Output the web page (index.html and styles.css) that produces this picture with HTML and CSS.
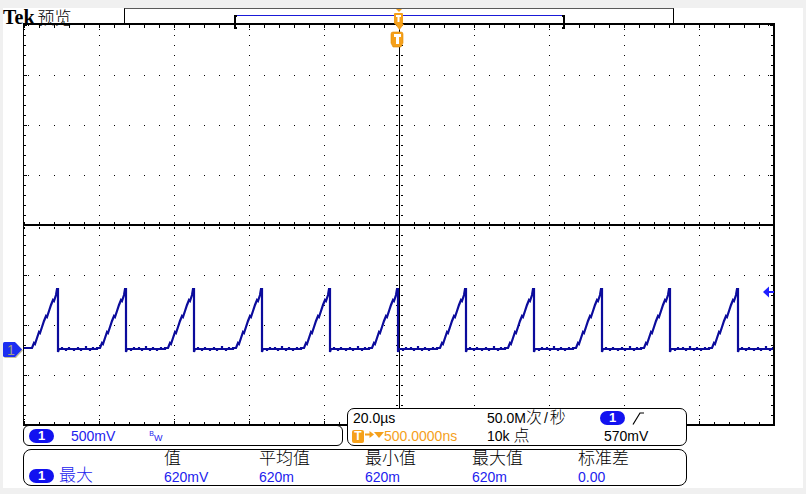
FILE: index.html
```html
<!DOCTYPE html>
<html lang="zh">
<head>
<meta charset="utf-8">
<title>Tek 预览</title>
<link rel="stylesheet" href="styles.css">
</head>
<body>
<div class="screen">
  <header class="header">
    <div class="brand"><span class="tek">Tek</span><span class="mode">预览</span></div>
    <div class="record">
      <div class="window"><div class="window-line"></div></div>
      <svg class="trig-pos" width="12" height="23" viewBox="393 8 12 23">
        <polygon points="396,9 402,9 399,12" fill="#f5a01a"/>
        <rect x="394" y="13" width="9" height="11" rx="1" fill="#f5a01a"/>
        <rect x="396" y="15" width="5" height="2" fill="#fff"/>
        <rect x="397.5" y="15" width="2" height="7" fill="#fff"/>
        <polygon points="395,24 404,24 399.5,30" fill="#f5a01a"/>
      </svg>
    </div>
  </header>

  <svg class="scope" width="772" height="403" viewBox="3 23 772 403">
    <defs>
      <pattern id="gh" patternUnits="userSpaceOnUse" x="24" y="25" width="15" height="50"><rect width="1" height="1" fill="#000"/></pattern>
      <pattern id="gv" patternUnits="userSpaceOnUse" x="24" y="25" width="75" height="10"><rect width="1" height="1" fill="#000"/></pattern>
      <pattern id="tx" patternUnits="userSpaceOnUse" x="24" y="0" width="15" height="10"><rect width="1" height="10" fill="#000"/></pattern>
      <pattern id="ty" patternUnits="userSpaceOnUse" x="0" y="25" width="10" height="10"><rect width="10" height="1" fill="#000"/></pattern>
      <pattern id="ge" patternUnits="userSpaceOnUse" x="24" y="25" width="2" height="50"><rect width="1" height="1" fill="#000"/></pattern>
      <pattern id="gt" patternUnits="userSpaceOnUse" x="24" y="25" width="75" height="2"><rect width="1" height="1" fill="#000"/></pattern>
      <pattern id="cy" patternUnits="userSpaceOnUse" x="395" y="25" width="9" height="10"><rect x="1" width="2" height="1" fill="#000"/><rect x="6" width="2" height="1" fill="#000"/></pattern>
      <pattern id="cx" patternUnits="userSpaceOnUse" x="24" y="220" width="15" height="9"><rect y="2" width="1" height="2" fill="#000"/><rect y="7" width="1" height="2" fill="#000"/></pattern>
      <clipPath id="plot"><rect x="24" y="25" width="749" height="399"/></clipPath>
    </defs>

    <g class="grid">
      <rect x="24" y="25" width="750" height="401" fill="url(#gh)"/>
      <rect x="24" y="25" width="750" height="400" fill="url(#gv)"/>
      <rect x="24" y="26" width="750" height="2" fill="url(#tx)"/>
      <rect x="24" y="422" width="750" height="2" fill="url(#tx)"/>
      <rect x="24" y="25" width="2" height="400" fill="url(#ty)"/>
      <rect x="771" y="25" width="2" height="400" fill="url(#ty)"/>
      <rect x="24" y="25" width="6" height="401" fill="url(#ge)"/>
      <rect x="768" y="25" width="5" height="401" fill="url(#ge)"/>
      <rect x="24" y="25" width="750" height="6" fill="url(#gt)"/>
      <rect x="24" y="419" width="750" height="6" fill="url(#gt)"/>
      <rect x="395" y="25" width="9" height="400" fill="url(#cy)"/>
      <rect x="24" y="220" width="750" height="9" fill="url(#cx)"/>
      <rect x="399" y="25" width="1" height="400" fill="#000"/>
      <rect x="24" y="224" width="750" height="2" fill="#000"/>
      <rect x="23" y="23" width="1" height="403" fill="#000"/>
      <rect x="23" y="23" width="752" height="2" fill="#000"/>
      <rect x="23" y="424" width="752" height="2" fill="#000"/>
      <rect x="773" y="23" width="2" height="403" fill="#000"/>
    </g>

    <path class="wave" clip-path="url(#plot)" d="M24 348 h8
      l2 -5 1 1 2 -6 2 -6 1 1 2 -6 2 -6 2 -5 1 1 2 -6 2 -6 2 -5 1 1 2 -6 1 -6 h1 v63 l1 -3 h3 v-2 v2 h4 v2 v-2 h3 v-2 v2 h5 v2 v-2 h4 v-2 v2 h3 v2 v-2 h5 v-3 v3 h4 v2 v-2 h3 v-2 v2 h4 v-1 h3
      l2 -5 1 1 2 -6 2 -6 1 1 2 -6 2 -6 2 -5 1 1 2 -6 2 -6 2 -5 1 1 2 -6 1 -6 h1 v63 l1 -3 h4 v2 v-2 h3 v-2 v2 h5 v-2 v2 h3 v2 v-2 h4 v-3 v3 h4 v2 v-2 h3 v-2 v2 h4 v2 v-2 h4 v-2 v2 h4 v-1 h3
      l2 -5 1 1 2 -6 2 -6 1 1 2 -6 2 -6 2 -5 1 1 2 -6 2 -6 2 -5 1 1 2 -6 1 -6 h1 v63 l1 -3 h3 v-2 v2 h4 v2 v-2 h3 v-2 v2 h5 v2 v-2 h4 v-2 v2 h3 v2 v-2 h5 v-3 v3 h4 v2 v-2 h3 v-2 v2 h4 v-1 h3
      l2 -5 1 1 2 -6 2 -6 1 1 2 -6 2 -6 2 -5 1 1 2 -6 2 -6 2 -5 1 1 2 -6 1 -6 h1 v63 l1 -3 h4 v2 v-2 h3 v-2 v2 h5 v-2 v2 h3 v2 v-2 h4 v-3 v3 h4 v2 v-2 h3 v-2 v2 h4 v2 v-2 h4 v-2 v2 h4 v-1 h3
      l2 -5 1 1 2 -6 2 -6 1 1 2 -6 2 -6 2 -5 1 1 2 -6 2 -6 2 -5 1 1 2 -6 1 -6 h1 v63 l1 -3 h3 v-2 v2 h4 v2 v-2 h3 v-2 v2 h5 v2 v-2 h4 v-2 v2 h3 v2 v-2 h5 v-3 v3 h4 v2 v-2 h3 v-2 v2 h4 v-1 h3
      l2 -5 1 1 2 -6 2 -6 1 1 2 -6 2 -6 2 -5 1 1 2 -6 2 -6 2 -5 1 1 2 -6 1 -6 h1 v63 l1 -3 h4 v2 v-2 h3 v-2 v2 h5 v-2 v2 h3 v2 v-2 h4 v-3 v3 h4 v2 v-2 h3 v-2 v2 h4 v2 v-2 h4 v-2 v2 h4 v-1 h3
      l2 -5 1 1 2 -6 2 -6 1 1 2 -6 2 -6 2 -5 1 1 2 -6 2 -6 2 -5 1 1 2 -6 1 -6 h1 v63 l1 -3 h3 v-2 v2 h4 v2 v-2 h3 v-2 v2 h5 v2 v-2 h4 v-2 v2 h3 v2 v-2 h5 v-3 v3 h4 v2 v-2 h3 v-2 v2 h4 v-1 h3
      l2 -5 1 1 2 -6 2 -6 1 1 2 -6 2 -6 2 -5 1 1 2 -6 2 -6 2 -5 1 1 2 -6 1 -6 h1 v63 l1 -3 h4 v2 v-2 h3 v-2 v2 h5 v-2 v2 h3 v2 v-2 h4 v-3 v3 h4 v2 v-2 h3 v-2 v2 h4 v2 v-2 h4 v-2 v2 h4 v-1 h3
      l2 -5 1 1 2 -6 2 -6 1 1 2 -6 2 -6 2 -5 1 1 2 -6 2 -6 2 -5 1 1 2 -6 1 -6 h1 v63 l1 -3 h3 v-2 v2 h4 v2 v-2 h3 v-2 v2 h5 v2 v-2 h4 v-2 v2 h3 v2 v-2 h5 v-3 v3 h4 v2 v-2 h3 v-2 v2 h4 v-1 h3
      l2 -5 1 1 2 -6 2 -6 1 1 2 -6 2 -6 2 -5 1 1 2 -6 2 -6 2 -5 1 1 2 -6 1 -6 h1 v63 l1 -3 h4 v2 v-2 h3 v-2 v2 h5 v-2 v2 h3 v2 v-2 h4 v-3 v3 h4 v2 v-2 h3 v-2 v2 h4 v2 v-2 h4 v-2 v2 h4 v-1 h3
      l2 -5 1 1 2 -6 2 -6 1 1 2 -6 2 -6 2 -5 1 1 2 -6 2 -6 2 -5 1 1 2 -6 1 -6 h1 v63 l1 -3 h3 v-2 v2 h4 v2 v-2 h3 v-2 v2 h5 v2 v-2 h4 v-2 v2 h3 v2 v-2 h5 v-3 v3 h4 v2 v-2 h3 v-2 v2 h4 v-1 h3"/>

    <g class="level-marker" fill="#1f1fff">
      <path d="M763 292 L769 286.5 V297.5 Z"/>
      <rect x="769" y="291" width="5" height="2"/>
    </g>

    <g class="trig-marker">
      <path d="M391 34 Q391 32 393 32 H401 Q403 32 403 34 V43 L401 47 H393 L391 43 Z" fill="#f5a01a" stroke="#e08c00" stroke-width="0.6"/>
      <rect x="394" y="34" width="7" height="3" fill="#fff"/>
      <rect x="396" y="34" width="3" height="10" fill="#fff"/>
    </g>

    <g class="ch-marker">
      <path d="M5.5 343 H16 L23 350.5 L16 358 H5.5 Q4 358 4 356.5 V344.5 Q4 343 5.5 343 Z" fill="#c4c0a0"/>
      <path d="M4.5 342 H15 L22 349.5 L15 357 H4.5 Q3 357 3 355.5 V343.5 Q3 342 4.5 342 Z" fill="#1c2ef2"/>
      <text x="7" y="355" font-family="Liberation Sans, sans-serif" font-size="14" fill="#a29e80">1</text>
    </g>
  </svg>

  <div class="readouts">
    <div class="panel ch-panel">
      <span class="pill">1</span>
      <span class="ch-text">500mV<span class="bw"><span class="bw-b">B</span><span class="bw-w">W</span></span></span>
    </div>
    <div class="panel tb-panel">
      <div class="tb-cell">20.0µs</div>
      <div class="tb-cell">50.0M<span class="cj">次</span><span class="slash">/</span><span class="cj">秒</span></div>
      <div class="tb-cell tb-trig">
        <span class="pill">1</span>
        <svg class="slope" width="13" height="13" viewBox="0 0 13 13"><polyline points="1,12.5 8,1 12,1" fill="none" stroke="#000" stroke-width="1.2"/></svg>
      </div>
      <div class="tb-cell tb-delay">
        <span class="tbox">T</span>
        <svg class="arrow" width="9" height="7" viewBox="0 0 9 7"><rect x="0" y="2.5" width="5" height="2" fill="#f5a01a"/><polygon points="4.5,0 9,3.5 4.5,7" fill="#f5a01a"/></svg>
        <svg class="tri" width="10" height="6" viewBox="0 0 10 6"><polygon points="0,0 10,0 5,6" fill="#f5a01a"/></svg>
        <span>500.0000ns</span>
      </div>
      <div class="tb-cell">10k <span class="cj">点</span></div>
      <div class="tb-cell tb-level">570mV</div>
    </div>
  </div>

  <div class="panel meas">
    <div class="mh-empty"></div>
    <div class="mh">值</div>
    <div class="mh">平均值</div>
    <div class="mh">最小值</div>
    <div class="mh">最大值</div>
    <div class="mh">标准差</div>
    <div class="mlabel"><span class="pill">1</span><span class="mname">最大</span></div>
    <div class="mv">620mV</div>
    <div class="mv">620m</div>
    <div class="mv">620m</div>
    <div class="mv">620m</div>
    <div class="mv">0.00</div>
  </div>
</div>
</body>
</html>
```

FILE: styles.css
```css
* {
  box-sizing: border-box;
}

html,
body {
  margin: 0;
  padding: 0;
}

body {
  background: #f0f0f0;
  font-family: "Liberation Sans", "Noto Sans CJK SC", sans-serif;
  font-size: 14px;
  color: #000;
}

.screen {
  width: 800px;
  height: 480px;
  margin: 8px 0 0 3px;
  background: #fff;
}

/* ---------- header ---------- */
.header {
  display: grid;
  grid-template-columns: 121px 550px;
  height: 15px;
}

.brand {
  display: flex;
  align-items: baseline;
  height: 15px;
  line-height: 15px;
  padding-top: 1px;
  white-space: nowrap;
}

.tek {
  font-family: "Liberation Serif", serif;
  font-weight: bold;
  font-size: 20px;
}

.mode {
  font-family: "Noto Sans CJK SC", sans-serif;
  font-weight: 300;
  font-size: 17px;
  margin-left: 3px;
}

.record {
  position: relative;
  height: 15px;
  border-top: 1px solid #5a5a5a;
  border-left: 1px solid #000;
  border-right: 1px solid #000;
  padding-left: 109px;
}

.window {
  position: relative;
  width: 331px;
  height: 14px;
  border-left: 2px solid #000;
  border-right: 2px solid #000;
}

.window::before,
.window::after {
  content: "";
  position: absolute;
  top: 0;
  bottom: 0;
  width: 1px;
  border-top: 2px solid #000;
  border-bottom: 2px solid #000;
}

.window::before {
  left: 0;
}

.window::after {
  right: 0;
}

.window-line {
  height: 1px;
  margin-top: 6px;
  background: #1a1ad8;
}

.trig-pos {
  position: absolute;
  left: 268px;
  top: -1px;
  display: block;
}

/* ---------- graticule ---------- */
.scope {
  display: block;
}

.wave {
  fill: none;
  stroke: #0b0b9c;
  stroke-width: 2.2;
}

/* ---------- readouts ---------- */
.readouts {
  display: flex;
  align-items: flex-end;
  height: 21px;
  margin-top: -1px;
  padding-left: 20px;
  gap: 4px;
}

.panel {
  border: 1px solid #000;
  background: #fff;
}

.pill {
  display: inline-flex;
  align-items: center;
  justify-content: center;
  flex: none;
  width: 25px;
  height: 14px;
  border-radius: 7px;
  background: #1212f0;
  color: #fff;
  font-weight: bold;
  font-size: 13px;
  line-height: 14px;
}

.ch-panel {
  width: 320px;
  height: 21px;
  border-radius: 6px;
  display: flex;
  align-items: center;
  padding-left: 5px;
  line-height: 19px;
  color: #2222ee;
}

.ch-text {
  margin-left: 17px;
  white-space: nowrap;
}

.bw {
  margin-left: 34px;
}

.bw-b {
  font-size: 7px;
  vertical-align: 5px;
}

.bw-w {
  font-size: 9px;
}

.tb-panel {
  position: relative;
  width: 340px;
  height: 38px;
  border-radius: 7px;
  display: grid;
  grid-template-columns: 134px 113px 1fr;
  grid-template-rows: 18px 18px;
  padding-left: 5px;
  line-height: 18px;
}

.tb-cell {
  white-space: nowrap;
}

.cj {
  font-size: 16px;
  font-weight: 300;
}

.slash {
  margin: 0 2px;
}

.tb-trig {
  display: flex;
  align-items: center;
  gap: 7px;
}

.slope {
  display: block;
}

.tb-delay {
  display: flex;
  align-items: center;
  margin-left: -1px;
  color: #f5a01a;
}

.tbox {
  display: inline-flex;
  align-items: center;
  justify-content: center;
  width: 12px;
  height: 13px;
  border-radius: 2px;
  background: #f5a01a;
  color: #fff;
  font-weight: bold;
  font-size: 12px;
  line-height: 13px;
}

.arrow {
  display: block;
  margin: 0 0 3px 1px;
}

.tri {
  display: block;
  margin-bottom: 3px;
}

.tb-level {
  padding-left: 4px;
}

/* ---------- measurement ---------- */
.meas {
  width: 664px;
  height: 37px;
  margin: 3px 0 0 20px;
  border-radius: 8px;
  display: grid;
  grid-template-columns: 140px 95px 106px 107px 106px 1fr;
  grid-template-rows: 17px 18px;
}

.mh {
  font-size: 17px;
  line-height: 17px;
  font-weight: 300;
  white-space: nowrap;
}

.mlabel {
  display: flex;
  align-items: center;
  gap: 5px;
  padding-left: 5px;
  color: #2222ee;
}

.mname {
  font-size: 17px;
  line-height: 20px;
  font-weight: 300;
}

.mv {
  color: #2222ee;
  line-height: 20px;
}
```
